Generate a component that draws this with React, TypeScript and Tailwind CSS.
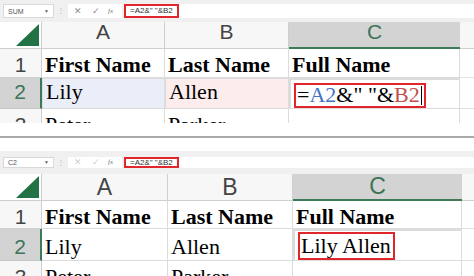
import clsx from 'clsx';
import type { ReactNode } from 'react';

const serif = "font-['Liberation_Serif','Times_New_Roman',serif]";
const sans = "font-['Liberation_Sans',Arial,sans-serif]";

type Cols = { a: string; b: string; c: string };

const P1: Cols = { a: 'w-[123px]', b: 'w-[124px]', c: 'w-[171px]' };
const P2: Cols = { a: 'w-[126px]', b: 'w-[125px]', c: 'w-[169px]' };

const FORMULA = '=A2&" "&B2';

const Toolbar = ({ name, dim }: { name: string; dim?: boolean }) => {
  const bar = dim ? 'h-[11px]' : 'h-[14px]';
  return (
    <div className={clsx('flex items-center bg-[#f0f0f0] pl-[3px]', sans, dim ? 'h-[23px]' : 'h-[22px]')}>
      {/* Name box */}
      <div
        className={clsx(
          'w-[51px] shrink-0 bg-white border border-[#d9d9d9] flex items-center justify-between pl-[4px] pr-[4px]',
          bar
        )}
      >
        <span className="text-[7px] leading-none text-[#555]">{name}</span>
        <span className="text-[5px] leading-none text-[#666]">▼</span>
      </div>
      <span className="w-[14px] shrink-0 text-center text-[8px] leading-none text-[#b8b8b8]">⋮</span>
      {/* Cancel / enter / fx */}
      <div className={clsx('w-[54px] shrink-0 bg-white flex items-center', bar)}>
        <span className={clsx('ml-[6px] text-[9px] leading-none', dim ? 'text-[#cfcfcf]' : 'text-[#8c8c8c]')}>✕</span>
        <span className={clsx('ml-[10px] text-[9px] leading-none', dim ? 'text-[#cfcfcf]' : 'text-[#8c8c8c]')}>✓</span>
        <span className={clsx("ml-[8px] text-[7px] leading-none italic text-[#777]", serif)}>fx</span>
      </div>
      {/* Formula bar */}
      <div className={clsx('flex-1 ml-[2px] bg-white flex items-stretch', bar)}>
        <div className="border-2 border-[#e2262b] flex items-center px-[4px] text-[8px] leading-none text-[#333] whitespace-pre">
          {FORMULA}
        </div>
      </div>
    </div>
  );
};

const Header = ({ cols, big }: { cols: Cols; big?: boolean }) => (
  <div
    className={clsx(
      'flex h-[27px] border-b border-[#cfcfcf] bg-[#f7f7f7] text-[#444]',
      sans,
      big ? 'text-[23px]' : 'text-[21px]'
    )}
  >
    <div className="w-[42px] shrink-0 flex items-end justify-end pr-[2px] pb-[2px] border-r border-[#cfcfcf] bg-white">
      <svg width="23" height="22" viewBox="0 0 23 22">
        <polygon points="23,0 23,22 0,22" fill="#217346" />
      </svg>
    </div>
    <div className={clsx(cols.a, 'shrink-0 flex items-center justify-center border-r border-[#cfcfcf]', big ? '' : 'pb-[7px]')}>
      A
    </div>
    <div className={clsx(cols.b, 'shrink-0 flex items-center justify-center border-r border-[#cfcfcf]', big ? '' : 'pb-[7px]')}>
      B
    </div>
    <div
      className={clsx(
        cols.c,
        'shrink-0 flex items-center justify-center bg-[#d3d3d3] border-b-2 border-[#3d7a5a] text-[#3d7458] -mb-px',
        big ? '' : 'pb-[5px]'
      )}
    >
      C
    </div>
    <div className="flex-1" />
  </div>
);

const Cell = ({ w, pb, className, children }: { w: string; pb: string; className?: string; children?: ReactNode }) => (
  <div
    className={clsx(
      w,
      pb,
      'shrink-0 flex items-end border-r border-b border-[#dcdcdc] pl-[3px] overflow-hidden whitespace-nowrap text-[22px] leading-[22px] text-black',
      serif,
      className
    )}
  >
    {children}
  </div>
);

const RowNum = ({ n, pb, sel }: { n: number; pb: string; sel?: boolean }) => (
  <div
    className={clsx(
      'w-[42px] shrink-0 flex items-end justify-center border-b text-[21px] leading-[22px]',
      sans,
      pb,
      sel
        ? 'bg-[#d3d3d3] text-[#3d7458] border-r-2 border-r-[#3d7a5a] border-b-[#c4c4c4]'
        : 'bg-[#f7f7f7] text-[#444] border-r border-[#d0d0d0]'
    )}
  >
    {n}
  </div>
);

const Rest = () => <div className="flex-1 border-b border-[#e2e2e2]" />;

export default function App() {
  return (
    <div className="w-[474px] h-[276px] overflow-hidden bg-white">
      {/* Before: editing C2 */}
      <div className="h-[123px] overflow-hidden">
        <Toolbar name="SUM" />
        <Header cols={P1} />
        <div className="flex h-[29px]">
          <RowNum n={1} pb="pb-[1px]" />
          <Cell w={P1.a} pb="pb-[1px]" className="font-bold">First Name</Cell>
          <Cell w={P1.b} pb="pb-[1px]" className="font-bold">Last Name</Cell>
          <Cell w={P1.c} pb="pb-[1px]" className="font-bold">Full Name</Cell>
          <Rest />
        </div>
        <div className="flex h-[31px]">
          <RowNum n={2} pb="pb-[5px]" sel />
          <Cell w={P1.a} pb="pb-[5px]" className="bg-[#e9eef8] border border-[#5d86cc] pl-[2px]">Lily</Cell>
          <Cell w={P1.b} pb="pb-[5px]" className="bg-[#fcecec] border border-[#d06a6a] pl-[2px]">Allen</Cell>
          <Cell w={P1.c} pb="pb-0" className="border-2 border-[#4f8a69] pl-0">
            <div className="h-[25px] border-2 border-[#e0262b] flex items-end pl-[1px] pr-[2px] whitespace-pre">
              <span>=</span>
              <span className="text-[#4472c4]">A2</span>
              <span>&amp;" "&amp;</span>
              <span className="text-[#c0504d]">B2</span>
              <span className="ml-[1px] mb-[1px] w-px h-[19px] bg-black" />
            </div>
          </Cell>
          <Rest />
        </div>
        <div className="flex h-[29px]">
          <RowNum n={3} pb="pb-[1px]" />
          <Cell w={P1.a} pb="pb-[1px]">Peter</Cell>
          <Cell w={P1.b} pb="pb-[1px]">Parker</Cell>
          <Cell w={P1.c} pb="pb-[1px]" />
          <Rest />
        </div>
      </div>

      {/* Divider */}
      <div className="h-[13px]" />
      <div className="h-[2px] bg-[#a9a9a9]" />
      <div className="h-[13px]" />

      {/* After: result in C2 */}
      <div>
        <Toolbar name="C2" dim />
        <Header cols={P2} big />
        <div className="flex h-[28px]">
          <RowNum n={1} pb="pb-0" />
          <Cell w={P2.a} pb="pb-0" className="font-bold">First Name</Cell>
          <Cell w={P2.b} pb="pb-0" className="font-bold">Last Name</Cell>
          <Cell w={P2.c} pb="pb-0" className="font-bold">Full Name</Cell>
          <Rest />
        </div>
        <div className="flex h-[32px]">
          <RowNum n={2} pb="pb-[2px]" sel />
          <Cell w={P2.a} pb="pb-[2px]">Lily</Cell>
          <Cell w={P2.b} pb="pb-[2px]">Allen</Cell>
          <Cell w={P2.c} pb="pb-0" className="border-2 border-[#4f8a69] pl-[3px]">
            <div className="h-[28px] border-2 border-[#e0262b] flex items-end pb-[1px] pl-[1px] pr-[2px]">Lily Allen</div>
          </Cell>
          <Rest />
        </div>
        <div className="flex h-[28px]">
          <RowNum n={3} pb="pb-0" />
          <Cell w={P2.a} pb="pb-0">Peter</Cell>
          <Cell w={P2.b} pb="pb-0">Parker</Cell>
          <Cell w={P2.c} pb="pb-0" />
          <Rest />
        </div>
      </div>
    </div>
  );
}
